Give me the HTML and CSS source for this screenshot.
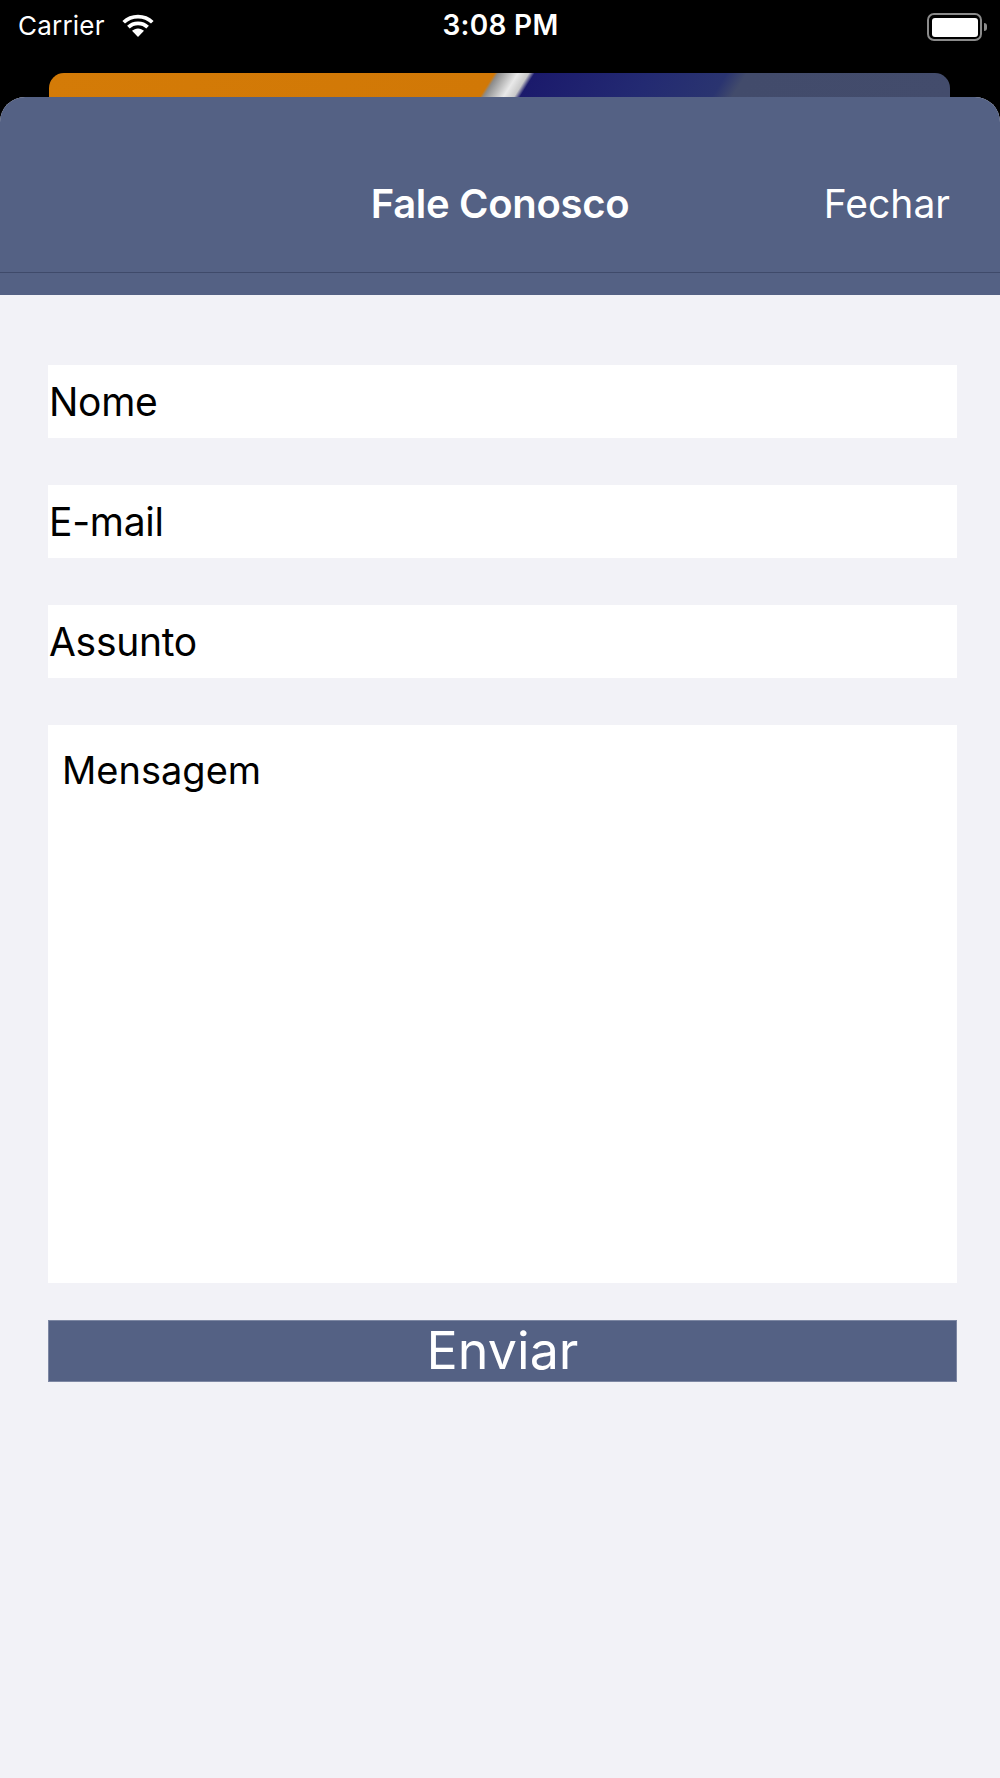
FILE: index.html
```html
<!DOCTYPE html>
<html lang="pt-BR">
<head>
    <meta charset="UTF-8">
    <meta name="viewport" content="width=device-width, initial-scale=1.0">
    <title>Fale Conosco</title>
    <link rel="stylesheet" href="styles.css">
</head>
<body>
    <div class="screen">
        <div class="status-bar">
            <div class="status-left">
                <span class="carrier">Carrier</span>
                <svg class="wifi" width="34" height="24" viewBox="0 0 34 24">
                    <path d="M17 4.5c5 0 9.6 1.9 13 5.1l2.6-2.7C28.5 3 23 0.8 17 0.8S5.5 3 1.4 6.9L4 9.6C7.4 6.4 12 4.5 17 4.5z" fill="#fff"/>
                    <path d="M17 11.2c3.2 0 6.1 1.2 8.3 3.3l2.6-2.7C25.1 9.1 21.3 7.6 17 7.6S8.9 9.1 6.1 11.8l2.6 2.7c2.2-2.1 5.1-3.3 8.3-3.3z" fill="#fff"/>
                    <path d="M17 14.4c-2.3 0-4.4 0.9-6 2.4L17 23l6-6.2c-1.6-1.5-3.7-2.4-6-2.4z" fill="#fff"/>
                </svg>
            </div>
            <span class="time">3:08 PM</span>
            <div class="status-right">
                <div class="battery"><div class="battery-fill"></div></div>
                <div class="battery-nub"></div>
            </div>
        </div>
        <div class="card-behind"></div>

        <div class="sheet">
            <div class="sheet-header">
                <div class="nav-row">
                    <h1>Fale Conosco</h1>
                    <a class="close" href="#">Fechar</a>
                </div>
                <div class="nav-strip"></div>
            </div>

            <form class="contact-form" id="contactForm">
                <input type="text" name="nome" placeholder="Nome">
                <input type="email" name="email" placeholder="E-mail">
                <input type="text" name="assunto" placeholder="Assunto">
                <textarea name="mensagem" placeholder="Mensagem"></textarea>
                <button type="submit">Enviar</button>
            </form>
        </div>
    </div>
</body>
</html>
```

FILE: styles.css
```css
html, body {
    margin: 0;
    padding: 0;
}
body {
    font-family: Inter, "Noto Sans", sans-serif;
    background-color: #000;
}
.screen {
    width: 1000px;
    height: 1778px;
    background-color: #000;
    display: flex;
    flex-direction: column;
    overflow: hidden;
}
.status-bar {
    height: 50px;
    padding: 0 13px 4px 18px;
    display: grid;
    grid-template-columns: 1fr auto 1fr;
    align-items: center;
    color: #fff;
}
.status-left {
    display: flex;
    align-items: center;
    gap: 16px;
}
.carrier {
    font-size: 26px;
    letter-spacing: 0.2px;
}
.wifi {
    margin-top: 2px;
}
.time {
    font-size: 28px;
    font-weight: 600;
    letter-spacing: 0.3px;
    margin-left: -4px;
}
.status-right {
    display: flex;
    align-items: center;
    justify-content: flex-end;
    padding-top: 4px;
}
.battery {
    width: 46px;
    height: 19px;
    border: 2.5px solid #8b8b8b;
    border-radius: 7px;
    padding: 2.5px;
}
.battery-fill {
    width: 100%;
    height: 100%;
    background-color: #fff;
    border-radius: 3px;
}
.battery-nub {
    width: 3px;
    height: 8px;
    margin-left: 2px;
    background-color: #8b8b8b;
    border-radius: 0 3px 3px 0;
}
.card-behind {
    margin: 19px 50px 0 49px;
    height: 24px;
    border-radius: 15px 15px 0 0;
    background: linear-gradient(122deg,
        #d47b07 0, #d17806 378px, #8c8c8c 381px, #e9e9e9 398px,
        #c9c9c9 407px, #1b1a6c 412px, #232a72 510px, #2a3470 575px,
        #424b6b 592px, #434c6c 100%);
}
.sheet {
    flex: 1;
    background-color: #f2f2f7;
    border-radius: 25px 25px 0 0;
    overflow: hidden;
}
.sheet-header {
    background-color: #546184;
}
.nav-row {
    position: relative;
    height: 54px;
    padding: 80px 0 41px;
    border-bottom: 1px solid #3f4a6a;
    color: #fff;
}
.nav-row h1 {
    margin: 0;
    text-align: center;
    font-size: 40px;
    font-weight: 600;
    line-height: 54px;
    letter-spacing: -0.3px;
}
.close {
    position: absolute;
    right: 50px;
    top: 80px;
    line-height: 54px;
    font-size: 39px;
    color: #fff;
    text-decoration: none;
}
.nav-strip {
    height: 22px;
}
.contact-form {
    display: flex;
    flex-direction: column;
    padding: 70px 43px 0 48px;
}
.contact-form input,
.contact-form textarea {
    box-sizing: border-box;
    width: 100%;
    border: none;
    outline: none;
    background-color: #fff;
    font-family: Inter, "Noto Sans", sans-serif;
    color: #000;
    margin: 0 0 47px;
}
.contact-form input {
    height: 73px;
    padding: 0 1px;
    font-size: 39px;
    letter-spacing: -0.3px;
}
.contact-form textarea {
    height: 558px;
    padding: 22px 14px;
    font-size: 38px;
    resize: none;
    margin-bottom: 37px;
}
.contact-form ::placeholder {
    color: #000;
    opacity: 1;
}
.contact-form button {
    height: 62px;
    padding: 0;
    border: 1px solid #7d87a3;
    background-color: #546184;
    color: #fff;
    font-family: Inter, "Noto Sans", sans-serif;
    font-size: 52px;
    line-height: 60px;
    cursor: pointer;
}
```
